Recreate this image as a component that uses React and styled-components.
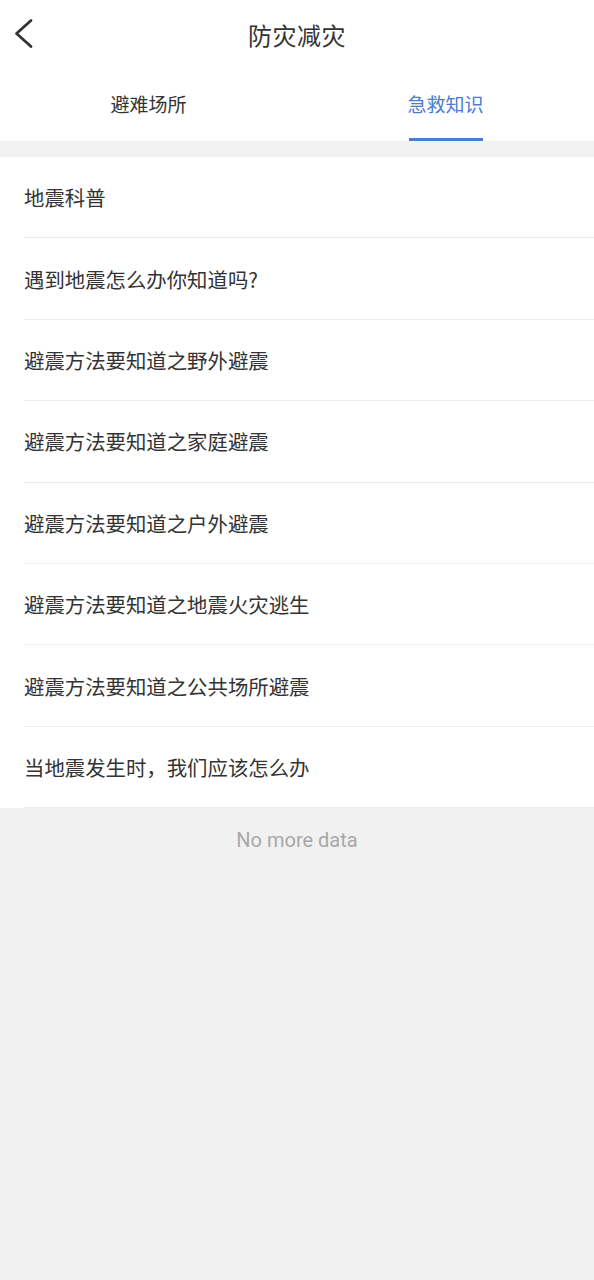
import React, { useState } from 'react'
import styled, { createGlobalStyle } from 'styled-components'

const GlobalStyle = createGlobalStyle`
  html, body {
    margin: 0;
    padding: 0;
    background: #f1f1f1;
  }
  body {
    font-family: "Noto Sans CJK SC", "Noto Sans", sans-serif;
  }
`

const Page = styled.div`
  width: 594px;
  min-height: 1280px;
  background: #f1f1f1;
`

const Top = styled.div`
  background: #fff;
`

const NavBar = styled.div`
  position: relative;
  height: 68px;
  display: flex;
  align-items: center;
  justify-content: center;
`

const Back = styled.button`
  position: absolute;
  left: 12px;
  top: 18px;
  width: 24px;
  height: 32px;
  padding: 0;
  border: none;
  background: none;
  display: block;
`

const Title = styled.div`
  font-size: 24px;
  color: #333;
  letter-spacing: 0.5px;
`

const Tabs = styled.div`
  display: grid;
  grid-template-columns: 1fr 1fr;
  height: 73px;
`

const Tab = styled.div`
  display: flex;
  flex-direction: column;
  align-items: center;
  justify-content: flex-end;
  font-size: 19px;
  color: ${p => (p.$active ? '#4a7bd5' : '#333')};
`

const TabLabel = styled.span`
  line-height: 28px;
  margin-bottom: 20px;
`

const Underline = styled.div`
  width: 74px;
  height: 3px;
  background: ${p => (p.$active ? '#4a7bd5' : 'transparent')};
`

const Gap = styled.div`
  height: 16px;
  background: #f2f2f2;
`

const List = styled.div`
  background: #fff;
  padding-left: 24px;
`

const Item = styled.div`
  height: 80.4px;
  display: flex;
  align-items: center;
  font-size: 20.4px;
  color: #333;
  border-bottom: 1px solid #ececec;
`

const Footer = styled.div`
  text-align: center;
  font-family: Roboto, "Noto Sans", sans-serif;
  font-size: 20px;
  color: #a8a8a8;
  padding-top: 20px;
`

const items = [
  '地震科普',
  '遇到地震怎么办你知道吗?',
  '避震方法要知道之野外避震',
  '避震方法要知道之家庭避震',
  '避震方法要知道之户外避震',
  '避震方法要知道之地震火灾逃生',
  '避震方法要知道之公共场所避震',
  '当地震发生时，我们应该怎么办',
]

const App = () => {
  const [tab, setTab] = useState(1)

  return (
    <Page>
      <GlobalStyle />
      <Top>
        <NavBar>
          <Back>
            <svg width="24" height="32" viewBox="0 0 24 32">
              <path d="M19 2.5 L4.5 15.5 L19 28.5" fill="none" stroke="#333" strokeWidth="2.8" strokeLinecap="round" strokeLinejoin="round" />
            </svg>
          </Back>
          <Title>防灾减灾</Title>
        </NavBar>
        <Tabs>
          {['避难场所', '急救知识'].map((t, i) => (
            <Tab key={t} $active={tab === i} onClick={() => setTab(i)}>
              <TabLabel>{t}</TabLabel>
              <Underline $active={tab === i} />
            </Tab>
          ))}
        </Tabs>
      </Top>
      <Gap />
      <List>
        {items.map(it => (
          <Item key={it}>{it}</Item>
        ))}
      </List>
      <Footer>No more data</Footer>
    </Page>
  )
}

export default App
